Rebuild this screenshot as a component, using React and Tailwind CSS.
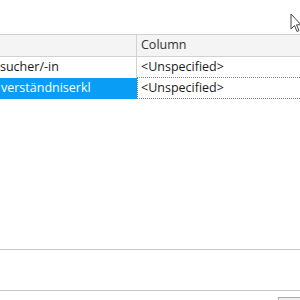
import React from "react";

export default function App() {
  const font = { fontFamily: '"Open Sans", "Noto Sans", sans-serif' };
  return (
    <div className="relative w-[300px] h-[300px] bg-white overflow-hidden text-[12.5px] text-[#1a1a1a]" style={font}>
      <div className="h-[34px]" />
      <div className="flex h-[23px] bg-[#f4f4f4] border-t border-b border-[#d2d2d2]">
        <div className="w-[137px] border-r border-[#d2d2d2]" />
        <div className="flex-1 pl-[4px] flex items-center text-[#333]">Column</div>
      </div>
      <div className="flex h-[21px]">
        <div className="w-[137px] border-r border-[#d2d2d2] flex items-center pl-0 whitespace-nowrap overflow-hidden">sucher/-in</div>
        <div className="flex-1 flex items-center pl-[4px] border-b border-dotted border-[#888]">&lt;Unspecified&gt;</div>
      </div>
      <div className="flex h-[21px]">
        <div className="w-[137px] bg-[#0a9df5] text-white flex items-center pl-[1px] whitespace-nowrap overflow-hidden">verständniserkl</div>
        <div className="flex-1 flex items-center pl-[3px] border-l border-b border-dotted border-[#777]">&lt;Unspecified&gt;</div>
      </div>
      <div className="h-[150px]" />
      <div className="h-[41px] border-t border-[#c8c8c8]" />
      <div className="border-t border-[#c8c8c8] h-[10px] flex justify-end">
        <div className="mt-[6px] w-[22px] h-[4px] border-t border-l border-[#aaa] bg-[#f0f0f0]" />
      </div>
      <svg className="absolute left-[290px] top-[13px]" width="12" height="20" viewBox="0 0 12 20">
        <path d="M1 1 L1 16 L4.5 12.5 L7 18.5 L9 17.5 L6.5 11.8 L11 11.8 Z" fill="white" stroke="#444" strokeWidth="1" strokeLinejoin="round" />
      </svg>
    </div>
  );
}
